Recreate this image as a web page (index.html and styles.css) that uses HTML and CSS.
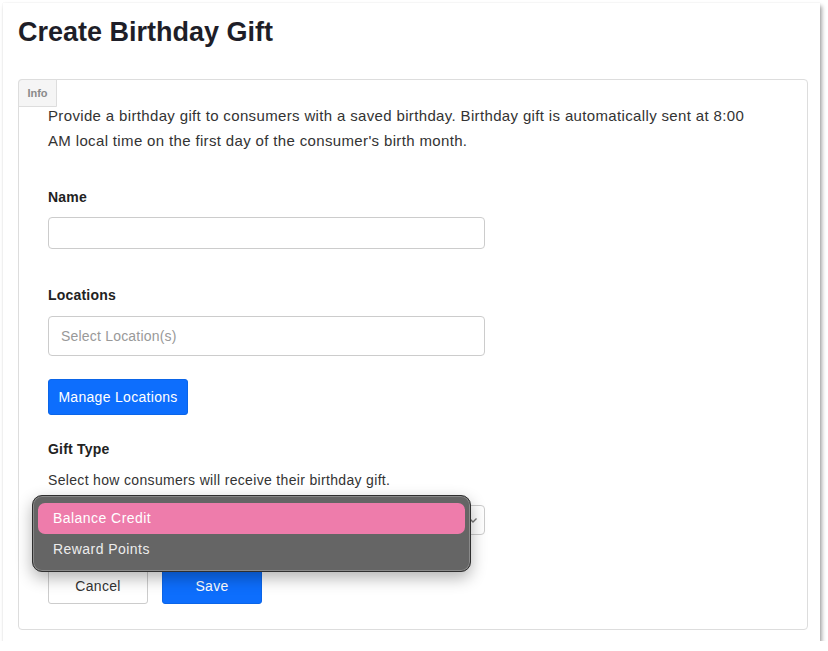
FILE: index.html
```html
<!DOCTYPE html>
<html lang="en">
<head>
    <meta charset="UTF-8">
    <meta name="viewport" content="width=device-width, initial-scale=1.0">
    <title>Create Birthday Gift</title>
    <link rel="stylesheet" href="styles.css">
</head>
<body>
    <div class="window">
        <h1>Create Birthday Gift</h1>
        <div class="card">
            <span class="info-tab">Info</span>
            <p class="intro">Provide a birthday gift to consumers with a saved birthday. Birthday gift is automatically sent at 8:00 AM local time on the first day of the consumer's birth month.</p>

            <label class="field-label label-name" for="name">Name</label>
            <input class="text-input name-input" type="text" id="name">

            <label class="field-label label-locations" for="locations">Locations</label>
            <input class="text-input locations-input" type="text" id="locations" placeholder="Select Location(s)">

            <button class="btn btn-primary manage-btn" type="button">Manage Locations</button>

            <label class="field-label label-gift" for="gift-type">Gift Type</label>
            <p class="help">Select how consumers will receive their birthday gift.</p>

            <!-- select is open: the menu covers its current value -->
            <div class="select-wrap">
                <div class="select-box" id="gift-type">
                    <svg class="chevron" width="10" height="10" viewBox="0 0 10 10">
                        <path d="M1.5 3.5 L5 7 L8.5 3.5" fill="none" stroke="#777" stroke-width="1.4"/>
                    </svg>
                </div>
                <ul class="menu">
                    <li class="menu-item active">Balance Credit</li>
                    <li class="menu-item">Reward Points</li>
                </ul>
            </div>

            <div class="actions">
                <button class="btn btn-default" type="button">Cancel</button>
                <button class="btn btn-primary save-btn" type="submit">Save</button>
            </div>
        </div>
    </div>
</body>
</html>
```

FILE: styles.css
```css
body {
    margin: 0;
    background: #fff;
    font-family: 'Liberation Sans', Arial, sans-serif;
    color: #333;
}

.window {
    margin: 3px 0 0 3px;
    width: 817px;
    height: 638px;
    box-sizing: border-box;
    padding: 13px 12px 0 15px;
    background: #fff;
    box-shadow: 0 0 1px rgba(0, 0, 0, 0.12), 2px 3px 4px rgba(0, 0, 0, 0.35);
}

h1 {
    margin: 0;
    font-size: 27px;
    line-height: 32px;
    font-weight: bold;
    color: #1e1e28;
}

.card {
    position: relative;
    margin-top: 31px;
    width: 790px;
    height: 551px;
    box-sizing: border-box;
    border: 1px solid #ddd;
    border-radius: 4px;
    padding: 23px 30px 0 29px;
}

.info-tab {
    position: absolute;
    top: -1px;
    left: -1px;
    width: 39px;
    height: 28px;
    box-sizing: border-box;
    background: #f5f5f5;
    border: 1px solid #ddd;
    border-radius: 4px 0 0 0;
    font-size: 11px;
    font-weight: bold;
    line-height: 26px;
    text-align: center;
    color: #8a8a8a;
}

.intro {
    margin: 0;
    max-width: 712px;
    font-size: 15px;
    line-height: 25px;
    letter-spacing: 0.35px;
    color: #333;
}

.field-label {
    display: block;
    font-size: 14px;
    line-height: 20px;
    font-weight: bold;
    letter-spacing: 0.2px;
    color: #222;
}

.label-name {
    margin-top: 34px;
}

.label-locations {
    margin-top: 36px;
}

.label-gift {
    margin-top: 24px;
}

.text-input {
    display: block;
    width: 437px;
    box-sizing: border-box;
    border: 1px solid #ccc;
    border-radius: 4px;
    font-family: inherit;
    font-size: 14px;
    letter-spacing: 0.2px;
    color: #333;
    padding: 0 12px;
    background: #fff;
}

.name-input {
    margin-top: 10px;
    height: 32px;
}

.locations-input {
    margin-top: 11px;
    height: 40px;
}

.text-input::placeholder {
    color: #999;
}

.btn {
    display: block;
    box-sizing: border-box;
    height: 36px;
    border-radius: 3px;
    font-family: inherit;
    font-size: 14px;
    letter-spacing: 0.3px;
    cursor: pointer;
}

.btn-primary {
    background: #0d6efd;
    border: 1px solid #0b65e8;
    color: #fff;
}

.btn-default {
    background: #fff;
    border: 1px solid #ccc;
    color: #333;
}

.manage-btn {
    margin-top: 23px;
    width: 140px;
    padding: 0;
}

.help {
    margin: 11px 0 0;
    font-size: 14px;
    line-height: 20px;
    letter-spacing: 0.33px;
    color: #333;
}

.select-wrap {
    position: relative;
    margin-top: 15px;
    width: 437px;
}

.select-box {
    height: 30px;
    box-sizing: border-box;
    border: 1px solid #ccc;
    border-radius: 4px;
    display: flex;
    align-items: center;
    justify-content: flex-end;
    padding: 0 6px 0 12px;
}

.menu {
    position: absolute;
    top: -10px;
    left: -16px;
    width: 439px;
    margin: 0;
    padding: 7px 5px 6px;
    box-sizing: border-box;
    list-style: none;
    background: #656565;
    border: 1px solid #2f2f2f;
    border-radius: 10px;
    box-shadow: inset 0 0 0 1px #8a8a8a, 0 6px 16px rgba(0, 0, 0, 0.3);
}

.menu-item {
    height: 31px;
    line-height: 31px;
    padding: 0 15px;
    border-radius: 7px;
    font-size: 14px;
    letter-spacing: 0.45px;
    color: #ececec;
}

.menu-item.active {
    background: #ee7cab;
    color: #fff;
}

.actions {
    display: flex;
    gap: 14px;
    margin-top: 33px;
}

.actions .btn-default {
    width: 100px;
}

.save-btn {
    width: 100px;
}
```
